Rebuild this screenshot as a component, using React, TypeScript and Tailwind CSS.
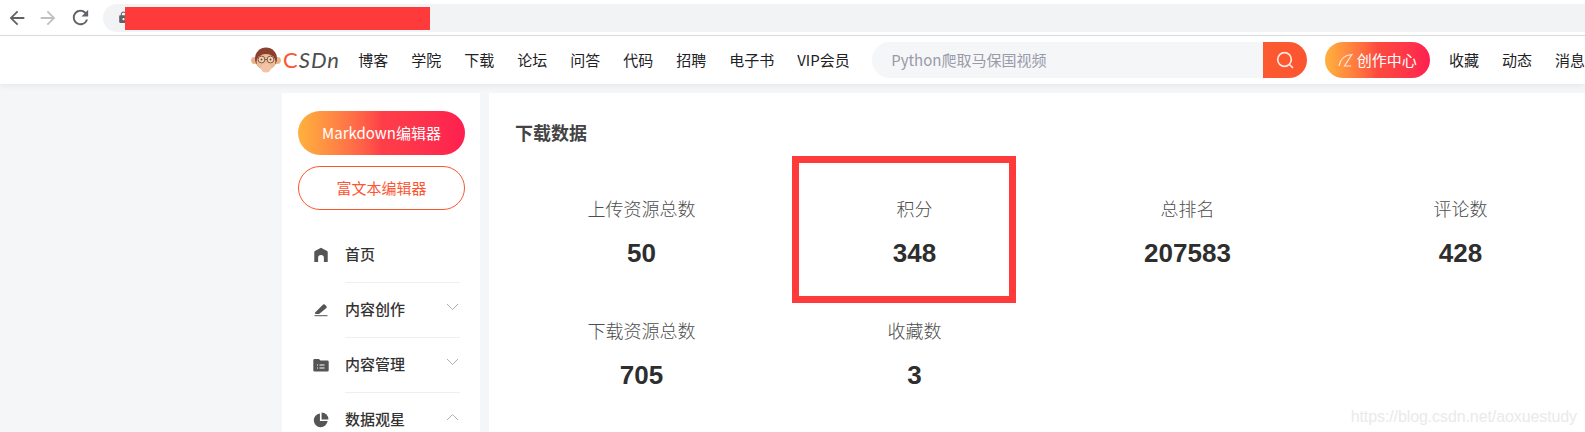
import { MdArrowBack, MdArrowForward, MdRefresh, MdLock } from 'react-icons/md';
import type { ReactNode } from 'react';

const cjk = "font-['Noto_Sans_CJK_SC','Liberation_Sans',sans-serif]";

const navLinks = [
  { label: '博客', className: 'w-[31px]' },
  { label: '学院', className: 'w-[31px]' },
  { label: '下载', className: 'w-[31px]' },
  { label: '论坛', className: 'w-[31px]' },
  { label: '问答', className: 'w-[31px]' },
  { label: '代码', className: 'w-[31px]' },
  { label: '招聘', className: 'w-[31px]' },
  { label: '电子书', className: 'w-[46px]' },
  { label: 'VIP会员', className: 'w-[57px]' },
];

const stats = [
  { label: '上传资源总数', value: '50' },
  { label: '积分', value: '348' },
  { label: '总排名', value: '207583' },
  { label: '评论数', value: '428' },
  { label: '下载资源总数', value: '705' },
  { label: '收藏数', value: '3' },
];

// Monkey mascot from the CSDN logo
const MonkeyLogo = () => (
  <svg width="30" height="26" viewBox="0 0 30 26">
    <circle cx="3.5" cy="13.5" r="3.4" fill="#e9b48c" />
    <circle cx="26.5" cy="13.5" r="3.4" fill="#e9b48c" />
    <ellipse cx="15" cy="11.5" rx="11" ry="11" fill="#8a3f2f" />
    <ellipse cx="15" cy="15" rx="9.5" ry="8" fill="#eebb95" />
    <ellipse cx="15" cy="21" rx="5" ry="4.5" fill="#f3c3a8" />
    <circle cx="10.5" cy="12.5" r="3.4" fill="#f5d3b5" stroke="#7d5a4a" strokeWidth="1" />
    <circle cx="19.5" cy="12.5" r="3.4" fill="#f5d3b5" stroke="#7d5a4a" strokeWidth="1" />
    <circle cx="10.5" cy="12.5" r="1" fill="#6b4a3a" />
    <circle cx="19.5" cy="12.5" r="1" fill="#6b4a3a" />
    <path d="M13.5 12.5h3" stroke="#7d5a4a" strokeWidth="1" />
  </svg>
);

const HomeIcon = () => (
  <svg width="16" height="16" viewBox="0 0 15 15" fill="#555">
    <path d="M7.5 .8 13.2 3.800a1 1 0 0 1 .6 1V14H10.200V10.200a2.700 2.700 0 0 0-5.400 0V14H1.200V4.800a1 1 0 0 1 .6-1Z" />
  </svg>
);

const PenIcon = () => (
  <svg width="16" height="15" viewBox="0 0 15 15" fill="#555">
    <path d="M1.600 10.600 9.600 2.600a1.200 1.200 0 0 1 1.700 0l1.600 1.600a1.200 1.200 0 0 1 0 1.700L5.600 12H1.600Z" />
    <rect x="1" y="13.200" width="13" height="1" />
  </svg>
);

const FolderIcon = () => (
  <svg width="16" height="14" viewBox="0 0 16 14" fill="#555">
    <path d="M1.500 1H6l1.400 1.600h7.100a1.200 1.200 0 0 1 1.200 1.200v8.500a1.200 1.200 0 0 1-1.200 1.200h-13A1.200 1.200 0 0 1 .3 12.300V2.200A1.200 1.200 0 0 1 1.500 1Z" />
    <path d="M6.500 7h5M6.500 10h5M4 7h1M4 10h1" stroke="#fff" strokeWidth="1" />
  </svg>
);

const PieIcon = () => (
  <svg width="16" height="16" viewBox="0 0 15 15" fill="#555">
    <path d="M6.500 1.300A6.500 6.500 0 1 0 13.700 8.500H6.500Z" />
    <path d="M8 .5A6.500 6.500 0 0 1 14.500 7H8Z" />
  </svg>
);

const Chevron = ({ up }: { up?: boolean }) => (
  <svg className="mb-[5px] mr-[1px]" width="13" height="8" viewBox="0 0 13 8" fill="none" stroke="#a8b0bd" strokeWidth="1">
    <path d={up ? 'M1 7 6.500 1.500 12 7' : 'M1 1 6.500 6.500 12 1'} />
  </svg>
);

const menuItems: { label: string; icon: ReactNode; arrow?: 'up' | 'down' }[] = [
  { label: '首页', icon: <HomeIcon /> },
  { label: '内容创作', icon: <PenIcon />, arrow: 'down' },
  { label: '内容管理', icon: <FolderIcon />, arrow: 'down' },
  { label: '数据观星', icon: <PieIcon />, arrow: 'up' },
];

const BrowserBar = () => (
  <div className="flex h-9 items-center border-b border-[#dadce0] bg-white pl-[6px]">
    <MdArrowBack className="mr-[9px] text-[#5f6368]" size={22} />
    <MdArrowForward className="mr-[10px] text-[#bdc1c6]" size={22} />
    <MdRefresh className="mr-[11px] text-[#5f6368]" size={23} />
    <div className="relative flex h-[28px] flex-1 items-center rounded-l-full bg-[#f1f3f4] pl-[14px]">
      <MdLock className="text-[#5f6368]" size={13} />
      {/* redacted address */}
      <div className="absolute left-[22px] top-[3px] h-[23px] w-[305px] bg-[#ff3a3a]" />
    </div>
  </div>
);

const Header = () => (
  <div className={`flex h-[48px] items-center bg-white shadow-[0_2px_6px_rgba(0,0,0,0.06)] ${cjk}`}>
    <div className="ml-[251px] flex w-[108px] items-center">
      <MonkeyLogo />
      <span className="ml-[2px] text-[22px] leading-none tracking-[1px] font-['Lato',sans-serif]">
        <span className="text-[#fc5531]">C</span>
        <span className="text-[#4d4d4d] italic">SDn</span>
      </span>
    </div>
    <div className="flex gap-[22px] text-[15px] text-[#222226]">
      {navLinks.map((link) => (
        <span key={link.label} className={`whitespace-nowrap ${link.className}`}>
          {link.label}
        </span>
      ))}
    </div>
    <div className="ml-[18px] flex h-[36px] w-[438px] items-center overflow-hidden rounded-full bg-[#f5f6f7]">
      <span className="flex-1 pl-[19px] text-[15px] text-[#999aaa]">Python爬取马保国视频</span>
      <span className="flex h-full w-[44px] items-center justify-center bg-gradient-to-r from-[#fc5a30] to-[#fc5531]">
        <svg width="20" height="20" viewBox="0 0 20 20" fill="none" stroke="#ffe6de" strokeWidth="1.700" strokeLinecap="round">
          <circle cx="9.500" cy="9.500" r="6.800" />
          <path d="M14.500 14.500 17.500 17.500" />
        </svg>
      </span>
    </div>
    <div className="ml-[18px] flex h-[36px] w-[106px] items-center justify-center rounded-full bg-gradient-to-r from-[#ffb13d] via-[#fd4a3f] to-[#fe1f4f] text-[15px] text-white">
      <svg className="mr-[4px]" width="15" height="14" viewBox="0 0 15 14" fill="none" stroke="#ffe6de" strokeWidth="1.200">
        <path d="M1 13C2 7 6 2 14 1.500 11.500 5 9 9 6.500 13H13" />
      </svg>
      创作中心
    </div>
    <div className="ml-[19px] flex gap-[23px] whitespace-nowrap text-[15px] text-[#222226]">
      <span>收藏</span>
      <span>动态</span>
      <span>消息</span>
    </div>
  </div>
);

const Sidebar = () => (
  <div className={`w-[198px] shrink-0 bg-white pl-[16px] pr-[15px] pt-[18px] ${cjk}`}>
    <div className="flex h-[44px] items-center justify-center rounded-full bg-gradient-to-r from-[#ffb13d] via-[#fd3f48] to-[#fe1f4f] text-[15px] text-white">
      Markdown编辑器
    </div>
    <div className="mt-[11px] flex h-[44px] items-center justify-center rounded-full border border-[#fc5531] text-[15px] text-[#fc5531]">
      富文本编辑器
    </div>
    <div className="mt-[18px]">
      {menuItems.map((item) => (
        <div key={item.label} className="flex h-[55px] items-center pl-[15px] pr-[5px]">
          <span className="flex w-[32px] shrink-0 justify-start pb-[2px]">{item.icon}</span>
          <div className="flex h-full flex-1 items-center justify-between border-b border-[#eeeff1] pb-[2px]">
            <span className="text-[15px] font-medium text-[#333]">{item.label}</span>
            {item.arrow === 'down' && <Chevron />}
            {item.arrow === 'up' && <Chevron up />}
          </div>
        </div>
      ))}
    </div>
  </div>
);

const Main = () => (
  <div className={`relative flex-1 bg-white pl-[16px] pt-[26px] ${cjk}`}>
    <h1 className="pl-[10px] text-[18px] leading-[26px] font-bold text-[#444]">下载数据</h1>
    <div className="mt-[50px] grid w-[1092px] grid-cols-4 gap-y-[27px]">
      {stats.map((stat) => (
        <div key={stat.label} className="flex h-[95px] flex-col items-center">
          <span className="text-[18px] leading-[26px] font-light text-[#4d4d4d]">{stat.label}</span>
          <span className="mt-[17px] font-['Liberation_Sans',sans-serif] text-[26px] leading-[30px] font-bold text-[#2e2e2e]">
            {stat.value}
          </span>
        </div>
      ))}
    </div>
    {/* red highlight box drawn over the screenshot */}
    <div className="absolute left-[303px] top-[63px] h-[147px] w-[224px] border-[7px] border-[#ff3a3a]" />
  </div>
);

export default function App() {
  return (
    <div className="relative h-[432px] w-[1585px] overflow-hidden bg-[#f5f6f7]">
      <BrowserBar />
      <Header />
      <div className="mt-[9px] flex h-[339px] gap-[9px] pl-[282px]">
        <Sidebar />
        <Main />
      </div>
      <span className="absolute right-[8px] top-[405px] font-['Liberation_Sans',sans-serif] text-[16px] tracking-[-0.1px] text-[#eaeaea]">
        https://blog.csdn.net/aoxuestudy
      </span>
    </div>
  );
}
